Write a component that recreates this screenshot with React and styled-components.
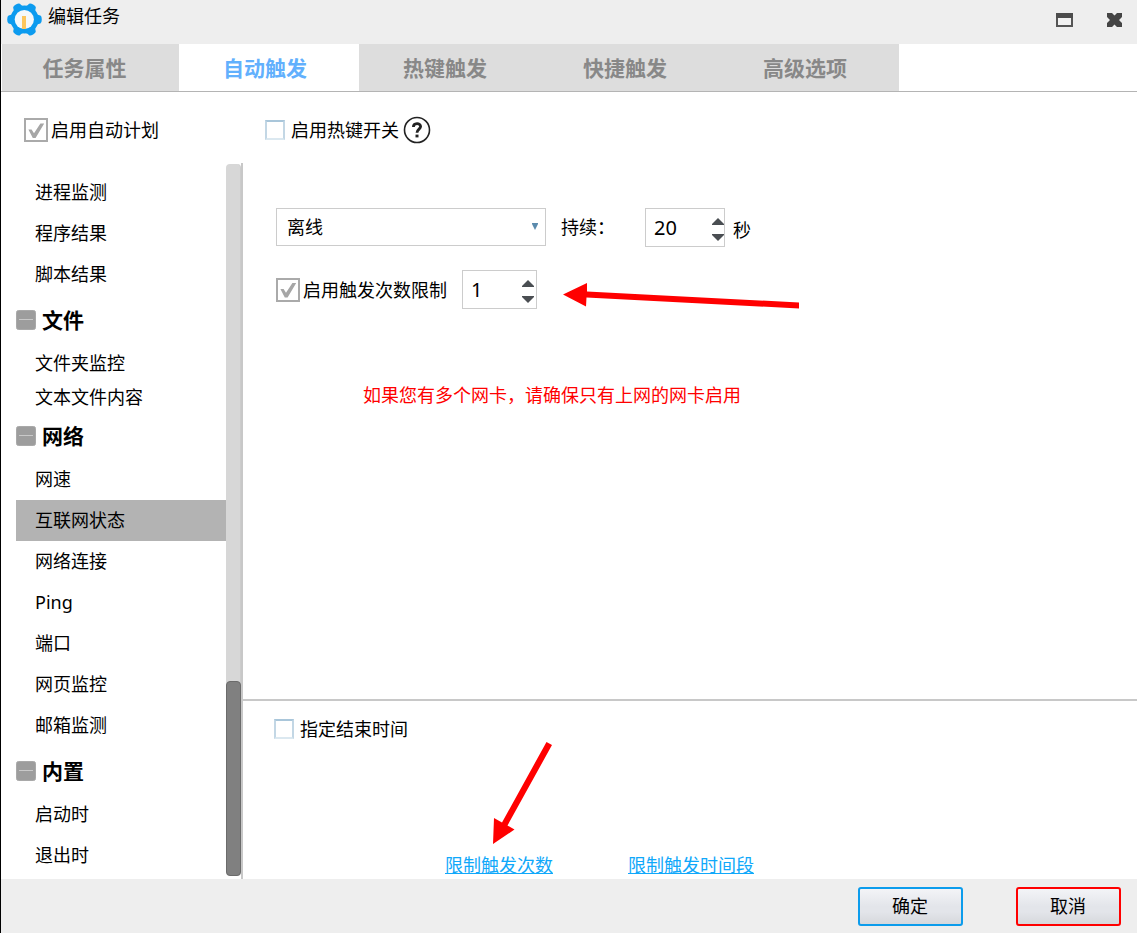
import React, { useState } from 'react';
import styled, { createGlobalStyle, css } from 'styled-components';

const GlobalStyle = createGlobalStyle`
    * {
        box-sizing: border-box;
    }

    body {
        margin: 0;
        background-color: #ffffff;
    }

    body, button, input, select {
        font-family: "Noto Sans", "Noto Sans CJK SC", sans-serif;
        font-size: 18px;
        font-weight: 400;
        line-height: 24px;
        color: #000000;
    }
`;

const StyledWindow = styled.div`
    min-height: 100vh;
    display: flex;
    flex-direction: column;
    border-left: 1px solid #000000;
`;

const StyledTitleBar = styled.header`
    height: 44px;
    padding: 3px 15px 0 6px;
    display: flex;
    align-items: flex-start;
    gap: 6px;
    background-color: #eeeeee;
`;

const StyledTitle = styled.h1`
    margin: 1px auto 0 0;
    font-size: 18px;
    font-weight: 400;
    line-height: 24px;
`;

const StyledWindowButtons = styled.div`
    padding-top: 10px;
    display: flex;
    gap: 34px;
`;

const StyledIconButton = styled.button`
    padding: 0;
    border: 0;
    background: none;
    display: flex;
`;

const StyledTabs = styled.nav`
    display: flex;
    padding-left: 1px;
    border-bottom: 1px solid #b4b4b4;
`;

const StyledTab = styled.button`
    width: 180px;
    height: 47px;
    padding: 0 8px 0 0;
    border: 0;
    font-size: 21px;
    font-weight: 700;
    color: ${({ $active }) => ($active ? '#62b0fd' : '#888888')};
    background-color: ${({ $active }) => ($active ? '#ffffff' : '#dddddd')};

    &:first-child {
        width: 177px;
        padding-right: 12px;
    }
`;

const StyledSwitches = styled.div`
    height: 71px;
    padding: 24px 0 19px 23px;
    display: flex;
    align-items: center;
`;

const StyledSwitchCell = styled.div`
    display: flex;
    align-items: center;
    gap: 4px;
    flex: ${({ $first }) => ($first ? '0 0 241px' : '1')};
`;

const StyledCheckLabel = styled.label`
    display: flex;
    align-items: center;
    gap: ${({ $light }) => ($light ? '6px' : '3px')};
    white-space: nowrap;
`;

const lightBox = css`
    width: 20px;
    height: 20px;
    border: 2px solid;
    border-color: #a9c6da #c3d7e5 #dbe8f0;
`;

const darkBox = css`
    width: 24px;
    height: 24px;
    border: 2px solid #aaaaaa;
`;

const StyledCheckbox = styled.input`
    appearance: none;
    margin: 0;
    background-color: #ffffff;
    ${({ $light }) => ($light ? lightBox : darkBox)}

    &:checked::after {
        content: "";
        display: block;
        width: 100%;
        height: 100%;
        background-color: #a6a6a6;
        clip-path: polygon(12% 48%, 28% 48%, 40% 66%, 72% 18%, 91% 18%, 48% 90%, 34% 90%);
    }
`;

const StyledMain = styled.main`
    flex: 1;
    display: flex;
`;

const StyledSidebar = styled.aside`
    flex: 0 0 242px;
    display: flex;
    border-right: 2px solid #c8c8c8;
`;

const StyledTree = styled.div`
    flex: 1;
    padding: 9px 0 0 15px;
`;

const StyledGroupTitle = styled.h2`
    height: 46px;
    margin: 0;
    display: flex;
    align-items: center;
    gap: 6px;
    font-size: 21px;
    font-weight: 700;
`;

const StyledList = styled.ul`
    list-style: none;
    margin: 0;
    padding: ${({ $compact }) => ($compact ? '2px 0 0' : '0 0 2px')};
`;

const StyledItem = styled.button`
    display: block;
    width: 100%;
    height: ${({ $compact }) => ($compact ? '34px' : '41px')};
    padding: ${({ $compact }) => ($compact ? '2px 0 0 19px' : '0 0 2px 19px')};
    border: 0;
    text-align: left;
    background-color: ${({ $active }) => ($active ? '#b3b3b3' : 'transparent')};
`;

const StyledScrollTrack = styled.div`
    width: 15px;
    margin: 1px 0 3px;
    display: flex;
    flex-direction: column;
    justify-content: flex-end;
    border-radius: 4px;
    background-color: #d7d7d7;
    border-right: 1px solid #cccccc;
`;

const StyledScrollThumb = styled.div`
    height: 195px;
    margin-right: -1px;
    border: 1px solid #6b6b6b;
    border-radius: 4px;
    background-color: #808080;
`;

const StyledContent = styled.div`
    flex: 1;
    display: flex;
    flex-direction: column;
`;

const StyledSettings = styled.section`
    flex: 1;
    padding: 45px 33px 0;
    border-bottom: 2px solid #c8c8c8;
`;

const StyledRow = styled.div`
    display: flex;
    align-items: ${({ $top }) => ($top ? 'flex-start' : 'center')};
    gap: 15px;
    height: 39px;
    margin-bottom: 23px;
`;

const StyledSelectBox = styled.div`
    position: relative;
    width: 270px;

    svg {
        position: absolute;
        right: 8px;
        top: 15px;
        pointer-events: none;
    }
`;

const StyledSelect = styled.select`
    appearance: none;
    display: block;
    width: 100%;
    height: 38px;
    padding: 0 10px;
    border: 1px solid #cccccc;
    border-radius: 0;
    background-color: #ffffff;
`;

const StyledFieldLabel = styled.label`
    width: 69px;
    line-height: 38px;
`;

const StyledField = styled.div`
    display: flex;
    gap: 8px;
`;

const StyledUnit = styled.span`
    align-self: flex-end;
    padding-bottom: 5px;
`;

const StyledSpinBox = styled.div`
    width: ${({ $wide }) => ($wide ? '80px' : '75px')};
    height: 39px;
    padding-right: ${({ $wide }) => ($wide ? '0' : '2px')};
    display: flex;
    border: 1px solid #cccccc;
`;

const StyledSpinInput = styled.input`
    appearance: textfield;
    flex: 1;
    min-width: 0;
    padding: 0 0 0 8px;
    border: 0;
    font-size: 20px;
    background: none;

    &::-webkit-inner-spin-button {
        appearance: none;
        margin: 0;
    }
`;

const StyledSpinArrows = styled.div`
    padding-top: 4px;
    display: flex;
    flex-direction: column;
    justify-content: center;
    gap: 9px;
`;

const StyledNotice = styled.p`
    margin: 74px 0 0 87px;
    color: #ff0000;
`;

const StyledBottom = styled.section`
    padding: 16px 31px 2px;
`;

const StyledPointer = styled.div`
    height: 104px;
    margin-bottom: 8px;
    padding-left: 218px;
`;

const StyledLinks = styled.div`
    display: flex;
    gap: 75px;
    padding-left: 171px;
`;

const StyledLink = styled.a`
    color: #10a8fa;
    text-decoration: underline;
`;

const StyledFooter = styled.footer`
    height: 54px;
    padding: 8px 16px 0;
    display: flex;
    justify-content: flex-end;
    gap: 53px;
    background-color: #eeeeee;
`;

const StyledButton = styled.button`
    width: 105px;
    height: 39px;
    padding: 0 1px 2px 0;
    border: 2px solid ${({ $danger }) => ($danger ? '#ff0000' : '#0c9cec')};
    border-radius: 3px;
    background: linear-gradient(#f3f4f7, #e3e5ea 50%, #e3e5ea 65%, #d6d8dc);
`;

const groups = [
    { items: ['进程监测', '程序结果', '脚本结果'] },
    { title: '文件', compact: true, items: ['文件夹监控', '文本文件内容'] },
    { title: '网络', items: ['网速', '互联网状态', '网络连接', 'Ping', '端口', '网页监控', '邮箱监测'] },
    { title: '内置', items: ['启动时', '退出时'] },
];

const tabs = ['任务属性', '自动触发', '热键触发', '快捷触发', '高级选项'];

const Logo = () => (
    <svg width="35" height="34" viewBox="0 0 35 34">
        <g fill="#0c9bef">
            <circle cx="17.5" cy="16.5" r="14" />
            {[0, 60, 120, 180, 240, 300].map((angle) => (
                <path
                    key={angle}
                    transform={`rotate(${angle} 17.5 16.5)`}
                    d="M27 7.5 C29 11.4 31 12 33.4 12.6 Q34.8 13.2 34.8 16.5 Q34.8 19.8 33.4 20.4 C31 21 29 21.6 27 25.5 Z"
                />
            ))}
        </g>
        <circle cx="17.3" cy="16.5" r="9.6" fill="#f4f8fb" />
        <rect x="15" y="13" width="4" height="13" fill="#fcc65e" />
    </svg>
);

const HelpIcon = () => (
    <svg width="28" height="28" viewBox="0 0 28 28" fill="none" stroke="#222222">
        <circle cx="14" cy="14" r="12.5" strokeWidth="1.6" />
        <path d="M10.4 11 C10.4 6.6 17.6 6.4 17.6 10.6 C17.6 13 14 13.4 14 16.8" strokeWidth="2.8" />
        <path d="M12.5 20 H15.5" strokeWidth="2.8" />
    </svg>
);

const MinusIcon = () => (
    <svg width="20" height="20" viewBox="0 0 20 20">
        <rect x="0.5" y="0.5" width="19" height="19" rx="2" fill="#9d9d9d" stroke="#a9a9a9" />
        <path d="M3 9.5 H17" stroke="#c9c9c9" />
    </svg>
);

const Check = ({ label, light, defaultChecked }) => (
    <StyledCheckLabel $light={light}>
        <StyledCheckbox type="checkbox" $light={light} defaultChecked={defaultChecked} />
        {label}
    </StyledCheckLabel>
);

const Spin = ({ id, label, initial, wide }) => {
    const [value, setValue] = useState(initial);
    return (
        <StyledSpinBox $wide={wide}>
            <StyledSpinInput
                id={id}
                type="number"
                aria-label={label}
                value={value}
                onChange={(e) => setValue(Number(e.target.value))}
            />
            <StyledSpinArrows>
                <StyledIconButton type="button" aria-label="增加" onClick={() => setValue(value + 1)}>
                    <svg width="12" height="7" viewBox="0 0 12 7"><path d="M0 7 V6 L6 0 L12 6 V7 Z" fill="#4a4e52" /></svg>
                </StyledIconButton>
                <StyledIconButton type="button" aria-label="减少" onClick={() => setValue(value - 1)}>
                    <svg width="12" height="7" viewBox="0 0 12 7"><path d="M0 0 V1 L6 7 L12 1 V0 Z" fill="#4a4e52" /></svg>
                </StyledIconButton>
            </StyledSpinArrows>
        </StyledSpinBox>
    );
};

const Sidebar = () => {
    const [selected, setSelected] = useState('互联网状态');
    return (
        <StyledSidebar>
            <StyledTree>
                {groups.map(({ title, compact, items }) => (
                    <React.Fragment key={items[0]}>
                        {title && <StyledGroupTitle><MinusIcon />{title}</StyledGroupTitle>}
                        <StyledList $compact={compact}>
                            {items.map((item) => (
                                <li key={item}>
                                    <StyledItem
                                        type="button"
                                        $compact={compact}
                                        $active={item === selected}
                                        onClick={() => setSelected(item)}
                                    >
                                        {item}
                                    </StyledItem>
                                </li>
                            ))}
                        </StyledList>
                    </React.Fragment>
                ))}
            </StyledTree>
            <StyledScrollTrack>
                <StyledScrollThumb />
            </StyledScrollTrack>
        </StyledSidebar>
    );
};

const App = () => {
    const [tab, setTab] = useState('自动触发');
    return (
        <StyledWindow lang="zh-CN">
            <GlobalStyle />
            <StyledTitleBar>
                <Logo />
                <StyledTitle>编辑任务</StyledTitle>
                <StyledWindowButtons>
                    <StyledIconButton type="button" aria-label="最大化">
                        <svg width="17" height="14" viewBox="0 0 17 14">
                            <rect x="1" y="1" width="15" height="12" fill="#f2f2f2" stroke="#555555" strokeWidth="2" />
                            <path d="M0 2.5 H17" stroke="#4c4c4c" strokeWidth="5" />
                        </svg>
                    </StyledIconButton>
                    <StyledIconButton type="button" aria-label="关闭">
                        <svg width="15" height="14" viewBox="0 0 15 14">
                            <path d="M0 0 H5 L7.5 2.6 L10 0 H15 V4 L12 7 L15 10 V14 H10 L7.5 11.4 L5 14 H0 V10 L3 7 L0 4 Z" fill="#444444" />
                        </svg>
                    </StyledIconButton>
                </StyledWindowButtons>
            </StyledTitleBar>
            <StyledTabs>
                {tabs.map((name) => (
                    <StyledTab key={name} type="button" $active={name === tab} onClick={() => setTab(name)}>
                        {name}
                    </StyledTab>
                ))}
            </StyledTabs>
            <StyledSwitches>
                <StyledSwitchCell $first>
                    <Check label="启用自动计划" defaultChecked />
                </StyledSwitchCell>
                <StyledSwitchCell>
                    <Check label="启用热键开关" light />
                    <StyledIconButton type="button" aria-label="帮助"><HelpIcon /></StyledIconButton>
                </StyledSwitchCell>
            </StyledSwitches>
            <StyledMain>
                <Sidebar />
                <StyledContent>
                    <StyledSettings>
                        <StyledRow $top>
                            <StyledSelectBox>
                                <StyledSelect aria-label="网络状态" defaultValue="离线">
                                    <option>离线</option>
                                    <option>在线</option>
                                </StyledSelect>
                                <svg width="6" height="7" viewBox="0 0 6 7"><path d="M0 0 H6 V1 L3 7 L0 1 Z" fill="#5b8bad" /></svg>
                            </StyledSelectBox>
                            <StyledFieldLabel htmlFor="duration">持续：</StyledFieldLabel>
                            <StyledField>
                                <Spin id="duration" initial={20} wide />
                                <StyledUnit>秒</StyledUnit>
                            </StyledField>
                        </StyledRow>
                        <StyledRow>
                            <Check label="启用触发次数限制" defaultChecked />
                            <Spin label="触发次数" initial={1} />
                            <svg width="247" height="39" viewBox="-11 0 247 39" fill="#ff0000">
                                <path d="M0 24.5 L24 13 V21.6 L236 32.5 V38.5 L23.5 27.6 L23 36.5 Z" />
                            </svg>
                        </StyledRow>
                        <StyledNotice>如果您有多个网卡，请确保只有上网的网卡启用</StyledNotice>
                    </StyledSettings>
                    <StyledBottom>
                        <Check label="指定结束时间" light />
                        <StyledPointer>
                            <svg width="60" height="104" viewBox="0 0 60 104" fill="#ff0000">
                                <path d="M1 103 L2 77 L10 81.5 L54.5 1 L60 4 L15.5 84.5 L22.5 88.5 Z" />
                            </svg>
                        </StyledPointer>
                        <StyledLinks>
                            <StyledLink href="#count">限制触发次数</StyledLink>
                            <StyledLink href="#period">限制触发时间段</StyledLink>
                        </StyledLinks>
                    </StyledBottom>
                </StyledContent>
            </StyledMain>
            <StyledFooter>
                <StyledButton type="button">确定</StyledButton>
                <StyledButton type="button" $danger>取消</StyledButton>
            </StyledFooter>
        </StyledWindow>
    );
};

export default App;
